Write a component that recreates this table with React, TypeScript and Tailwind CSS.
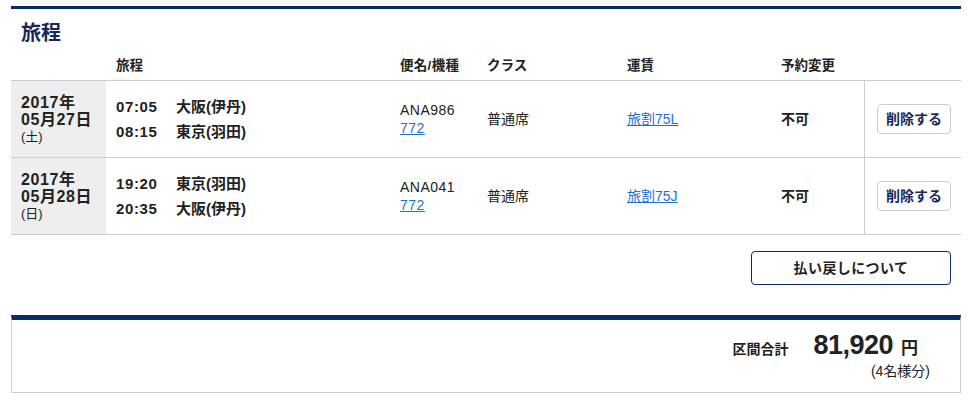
import React from 'react';

type Leg = { time: string; place: string };
type Segment = {
  year: string;
  date: string;
  weekday: string;
  legs: Leg[];
  flight: string;
  aircraft: string;
  seat: string;
  fare: string;
  change: string;
};

const SEGMENTS: Segment[] = [
  {
    year: '2017年',
    date: '05月27日',
    weekday: '(土)',
    legs: [
      { time: '07:05', place: '大阪(伊丹)' },
      { time: '08:15', place: '東京(羽田)' },
    ],
    flight: 'ANA986',
    aircraft: '772',
    seat: '普通席',
    fare: '旅割75L',
    change: '不可',
  },
  {
    year: '2017年',
    date: '05月28日',
    weekday: '(日)',
    legs: [
      { time: '19:20', place: '東京(羽田)' },
      { time: '20:35', place: '大阪(伊丹)' },
    ],
    flight: 'ANA041',
    aircraft: '772',
    seat: '普通席',
    fare: '旅割75J',
    change: '不可',
  },
];

const FONT = "font-['Liberation_Sans','Noto_Sans_CJK_JP',sans-serif]";

const App: React.FC = () => {
  return (
    <div className={`${FONT} w-[967px] h-[401px] bg-white text-[#222]`}>
      <div className="ml-[11px] w-[950px] pt-[6px]">
        <section className="border-t-[3px] border-[#0a2a62]">
          <h2 className="pl-[10px] pt-[11px] text-[20px] leading-[26px] font-bold text-[#14285a]">旅程</h2>

          <div className="flex h-[34px] items-end pb-[5px] text-[13.5px] font-bold leading-[18px]">
            <div className="w-[95px]" />
            <div className="w-[284px] pl-[10px]">旅程</div>
            <div className="w-[87px] pl-[10px] tracking-[0.3px]">便名/機種</div>
            <div className="w-[140px] pl-[10px]">クラス</div>
            <div className="w-[154px] pl-[10px]">運賃</div>
            <div className="w-[93px] pl-[10px]">予約変更</div>
          </div>

          <div className="border-t border-[#ccc]">
            {SEGMENTS.map((s) => (
              <div key={s.date} className="flex h-[77px] border-b border-[#ccc]">
                <div className="flex w-[95px] flex-col justify-center bg-[#eee] pl-[10px]">
                  <div className="text-[16px] font-bold leading-[17px] tracking-[0.6px]">{s.year}</div>
                  <div className="text-[16px] font-bold leading-[17px] tracking-[0.6px]">{s.date}</div>
                  <div className="text-[13px] leading-[17px]">{s.weekday}</div>
                </div>
                <div className="flex w-[284px] flex-col justify-center gap-[7px] pl-[10px] text-[15px] font-bold leading-[18px]">
                  {s.legs.map((l) => (
                    <div key={l.time} className="flex">
                      <span className="w-[60px] tracking-[0.6px]">{l.time}</span>
                      <span>{l.place}</span>
                    </div>
                  ))}
                </div>
                <div className="flex w-[87px] flex-col justify-center pl-[10px] text-[14px] leading-[18px]">
                  <div className="tracking-[0.5px]">{s.flight}</div>
                  <a href="#" className="tracking-[0.5px] text-[#1f6fd6] underline">{s.aircraft}</a>
                </div>
                <div className="flex w-[140px] items-center pl-[10px] text-[14px]">{s.seat}</div>
                <div className="flex w-[154px] items-center pl-[10px] text-[14px]">
                  <a href="#" className="text-[#1f6fd6] underline">{s.fare}</a>
                </div>
                <div className="flex w-[93px] items-center pl-[10px] text-[14px] font-bold">{s.change}</div>
                <div className="flex flex-1 items-center border-l border-[#ccc] pl-[12px]">
                  <button className="h-[30px] w-[74px] rounded-[4px] border border-[#ccc] bg-white text-[14px] font-bold text-[#14285a]">
                    削除する
                  </button>
                </div>
              </div>
            ))}
          </div>

          <div className="flex justify-end pt-[16px] pr-[10px]">
            <button className="h-[34px] w-[200px] rounded-[4px] border border-[#0a2a62] bg-white text-[14px] font-bold tracking-[0.4px] text-[#222]">
              払い戻しについて
            </button>
          </div>
        </section>

        <section className="mt-[30px] h-[78px] border-x border-b border-t-[5px] border-x-[#ccc] border-b-[#ccc] border-t-[#0a2a62]">
          <div className="flex flex-col items-end pt-[10px]">
            <div className="flex items-baseline pr-[42px]">
              <span className="mr-[25px] text-[14px] font-bold">区間合計</span>
              <span className="text-[27px] font-bold leading-[30px] tracking-[-0.5px]">81,920</span>
              <span className="ml-[8px] text-[17px] font-bold">円</span>
            </div>
            <div className="pr-[30px] text-[14px] leading-[18px]">(4名様分)</div>
          </div>
        </section>
      </div>
    </div>
  );
};

export default App;
